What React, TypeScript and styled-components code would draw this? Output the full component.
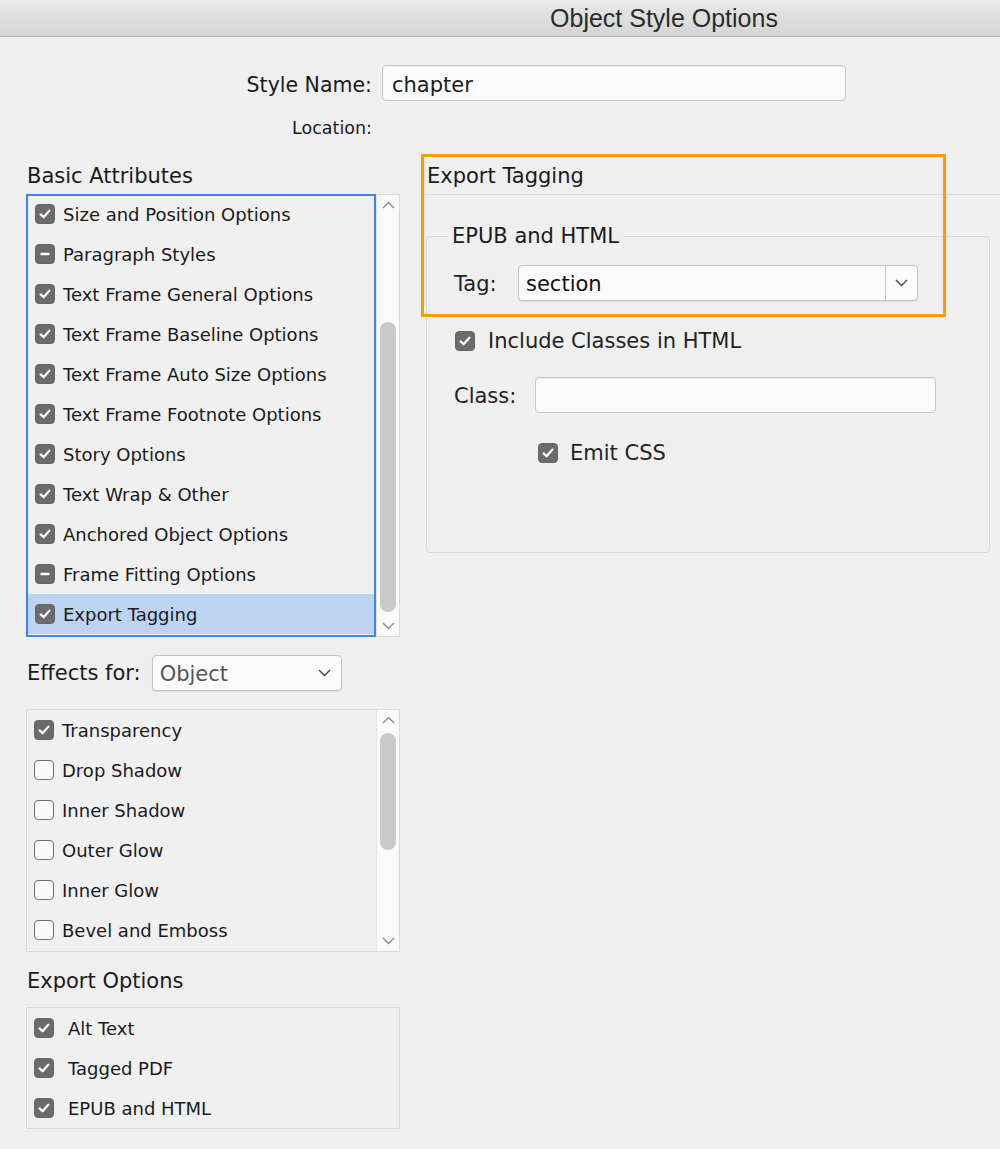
import React from 'react';
import styled, { createGlobalStyle } from 'styled-components';

const GlobalStyle = createGlobalStyle`
  html, body {
    margin: 0;
    padding: 0;
    background: #efefef;
  }
  body {
    font-family: 'DejaVu Sans', 'Noto Sans', sans-serif;
    color: #1a1a1a;
  }
  * { box-sizing: border-box; }
`;

type CheckState = 'on' | 'off' | 'mixed';

const basicAttributes: { label: string; state: CheckState }[] = [
  { label: 'Size and Position Options', state: 'on' },
  { label: 'Paragraph Styles', state: 'mixed' },
  { label: 'Text Frame General Options', state: 'on' },
  { label: 'Text Frame Baseline Options', state: 'on' },
  { label: 'Text Frame Auto Size Options', state: 'on' },
  { label: 'Text Frame Footnote Options', state: 'on' },
  { label: 'Story Options', state: 'on' },
  { label: 'Text Wrap & Other', state: 'on' },
  { label: 'Anchored Object Options', state: 'on' },
  { label: 'Frame Fitting Options', state: 'mixed' },
  { label: 'Export Tagging', state: 'on' },
];

const effects: { label: string; state: CheckState }[] = [
  { label: 'Transparency', state: 'on' },
  { label: 'Drop Shadow', state: 'off' },
  { label: 'Inner Shadow', state: 'off' },
  { label: 'Outer Glow', state: 'off' },
  { label: 'Inner Glow', state: 'off' },
  { label: 'Bevel and Emboss', state: 'off' },
];

const exportOptions = ['Alt Text', 'Tagged PDF', 'EPUB and HTML'];

const Window = styled.div`
  width: 1000px;
  height: 1149px;
  overflow: hidden;
  background: #efefef;
`;

const TitleBar = styled.div`
  height: 37px;
  background: linear-gradient(#e9e9e9, #d4d4d4);
  border-bottom: 1px solid #b4b4b4;
  display: flex;
  align-items: center;
  justify-content: center;
  padding-left: 328px;
  font-family: 'Liberation Sans', Arial, sans-serif;
  font-size: 25px;
  color: #2b2b2b;
`;

const NameGrid = styled.div`
  display: grid;
  grid-template-columns: 372px 464px;
  column-gap: 10px;
  row-gap: 16px;
  margin-top: 28px;
  align-items: center;
`;

const FieldLabel = styled.div<{ $size?: number; $shift?: number }>`
  text-align: right;
  font-size: ${p => p.$size ?? 20.5}px;
  line-height: 22px;
  padding-top: ${p => p.$shift ?? 0}px;
`;

const TextBox = styled.div<{ $width: number }>`
  width: ${p => p.$width}px;
  height: 36px;
  background: #fbfbfb;
  border: 1px solid #c6c6c6;
  border-radius: 4px;
  box-shadow: inset 0 1px 1px rgba(0, 0, 0, 0.06);
  display: flex;
  align-items: center;
  padding: 4px 0 0 9px;
  font-size: 21px;
`;

const Main = styled.div`
  display: flex;
  margin-top: 24px;
  padding-left: 26px;
`;

const LeftColumn = styled.div`
  width: 374px;
  display: flex;
  flex-direction: column;
`;

const RightColumn = styled.div`
  position: relative;
  flex: 1;
  margin-left: 25px;
`;

const SectionTitle = styled.div<{ $pad?: number; $top?: number }>`
  font-size: 21px;
  line-height: 26px;
  height: 26px;
  margin-top: ${p => p.$top ?? 0}px;
  padding-left: ${p => p.$pad ?? 1}px;
`;

const ListFrame = styled.div<{ $height: number; $top: number }>`
  display: flex;
  height: ${p => p.$height}px;
  margin-top: ${p => p.$top}px;
  border: 1px solid #d9d9d9;
  background: #f0f0f0;
`;

const ListPane = styled.div<{ $focused?: boolean }>`
  flex: 1;
  overflow: hidden;
  margin: ${p => (p.$focused ? '-1px 0 -1px -1px' : '0')};
  border: ${p => (p.$focused ? '2px solid #3a86f4' : 'none')};
`;

const Rows = styled.div<{ $offset?: number }>`
  margin-top: ${p => p.$offset ?? 0}px;
`;

const Row = styled.div<{ $selected?: boolean; $gap?: number }>`
  height: 40px;
  display: flex;
  align-items: center;
  gap: ${p => p.$gap ?? 8}px;
  padding-left: 7px;
  font-size: 18px;
  background: ${p => (p.$selected ? '#bcd4f1' : 'transparent')};
`;

const Box = styled.span<{ $state: CheckState }>`
  width: 20px;
  height: 20px;
  flex: none;
  border-radius: 4px;
  display: inline-flex;
  align-items: center;
  justify-content: center;
  background: ${p => (p.$state === 'off' ? '#f9f9f9' : '#6b6b6b')};
  border: 1.5px solid ${p => (p.$state === 'off' ? '#6e6e6e' : '#666')};
`;

const Scrollbar = styled.div`
  width: 23px;
  flex: none;
  background: #fafafa;
  border-left: 1px solid #e4e4e4;
  display: flex;
  flex-direction: column;
  align-items: center;
`;

const Arrow = styled.div`
  height: 20px;
  display: flex;
  align-items: center;
  justify-content: center;
`;

const Track = styled.div`
  flex: 1;
  width: 100%;
  padding: 0 3px;
`;

const Thumb = styled.div<{ $top: number; $height: number }>`
  margin-top: ${p => p.$top}px;
  height: ${p => p.$height}px;
  border-radius: 9px;
  background: #c9c9c9;
`;

const EffectsRow = styled.div`
  display: flex;
  align-items: center;
  gap: 11px;
  margin-top: 18px;
  padding-left: 1px;
  font-size: 21px;
`;

const Dropdown = styled.div<{ $width: number }>`
  width: ${p => p.$width}px;
  height: 36px;
  display: flex;
  align-items: center;
  background: #fbfbfb;
  border: 1px solid #c3c3c3;
  border-radius: 4px;
  box-shadow: 0 1px 1px rgba(0, 0, 0, 0.08);
  font-size: 21px;
`;

const DropdownValue = styled.div<{ $muted?: boolean }>`
  flex: 1;
  padding: 2px 0 0 7px;
  color: ${p => (p.$muted ? '#555' : '#111')};
`;

const DropdownButton = styled.div<{ $divided?: boolean }>`
  width: 32px;
  height: 100%;
  display: flex;
  align-items: center;
  justify-content: center;
  border-left: ${p => (p.$divided ? '1px solid #c9c9c9' : 'none')};
`;

const Separator = styled.div`
  height: 1px;
  background: #d9d9d9;
  margin-top: 5px;
`;

const GroupBox = styled.fieldset`
  margin: 28px 10px 0 1px;
  height: 330px;
  padding: 0 0 0 27px;
  border: 1px solid #d8d8d8;
  border-radius: 4px;
`;

const Legend = styled.legend`
  font-size: 21px;
  line-height: 26px;
  padding: 0 4px;
  margin-left: -6px;
`;

const FormRow = styled.div<{ $top: number; $indent?: number; $gap?: number }>`
  display: flex;
  align-items: center;
  margin-top: ${p => p.$top}px;
  padding-left: ${p => p.$indent ?? 0}px;
  gap: ${p => p.$gap ?? 0}px;
  font-size: 21px;
  color: #222;
`;

const InlineLabel = styled.span<{ $width: number }>`
  width: ${p => p.$width}px;
  flex: none;
  padding-top: 2px;
`;

const Highlight = styled.div`
  position: absolute;
  left: -4px;
  top: -9px;
  width: 525px;
  height: 163px;
  border: 3px solid #ff9a00;
  pointer-events: none;
`;

const Check: React.FC<{ state: CheckState }> = ({ state }) => (
  <Box $state={state}>
    {state === 'on' && (
      <svg width="14" height="14" viewBox="0 0 14 14">
        <path d="M2.6 7.4 L5.6 10.3 L11.4 3.6" fill="none" stroke="#fff" strokeWidth="2.2" strokeLinecap="round" strokeLinejoin="round" />
      </svg>
    )}
    {state === 'mixed' && (
      <svg width="12" height="12" viewBox="0 0 12 12">
        <rect x="1.5" y="4.8" width="9" height="2.4" rx="0.6" fill="#fff" />
      </svg>
    )}
  </Box>
);

const Chevron: React.FC<{ up?: boolean; color?: string }> = ({ up, color = '#8a8a8a' }) => (
  <svg width="13" height="8" viewBox="0 0 13 8">
    <path d={up ? 'M1 7 L6.5 1.5 L12 7' : 'M1 1 L6.5 6.5 L12 1'} fill="none" stroke={color} strokeWidth="1.4" />
  </svg>
);

const ScrollColumn: React.FC<{ thumbTop: number; thumbHeight: number }> = ({ thumbTop, thumbHeight }) => (
  <Scrollbar>
    <Arrow><Chevron up /></Arrow>
    <Track>
      <Thumb $top={thumbTop} $height={thumbHeight} />
    </Track>
    <Arrow><Chevron /></Arrow>
  </Scrollbar>
);

const App: React.FC = () => (
  <Window>
    <GlobalStyle />
    <TitleBar>Object Style Options</TitleBar>

    <NameGrid>
      <FieldLabel $shift={4}>Style Name:</FieldLabel>
      <TextBox $width={464}>chapter</TextBox>
      <FieldLabel $size={17.5}>Location:</FieldLabel>
      <div />
    </NameGrid>

    <Main>
      <LeftColumn>
        <SectionTitle>Basic Attributes</SectionTitle>
        <ListFrame $height={443} $top={5}>
          <ListPane $focused>
            <Rows $offset={-2}>
              {basicAttributes.map((item, i) => (
                <Row key={item.label} $selected={i === basicAttributes.length - 1}>
                  <Check state={item.state} />
                  {item.label}
                </Row>
              ))}
            </Rows>
          </ListPane>
          <ScrollColumn thumbTop={107} thumbHeight={290} />
        </ListFrame>

        <EffectsRow>
          Effects for:
          <Dropdown $width={190}>
            <DropdownValue $muted>Object</DropdownValue>
            <DropdownButton>
              <Chevron color="#444" />
            </DropdownButton>
          </Dropdown>
        </EffectsRow>

        <ListFrame $height={243} $top={18}>
          <ListPane>
            <Rows>
              {effects.map(item => (
                <Row key={item.label}>
                  <Check state={item.state} />
                  {item.label}
                </Row>
              ))}
            </Rows>
          </ListPane>
          <ScrollColumn thumbTop={3} thumbHeight={117} />
        </ListFrame>

        <SectionTitle $top={16}>Export Options</SectionTitle>
        <ListFrame $height={122} $top={13}>
          <ListPane>
            <Rows>
              {exportOptions.map(label => (
                <Row key={label} $gap={14}>
                  <Check state="on" />
                  {label}
                </Row>
              ))}
            </Rows>
          </ListPane>
        </ListFrame>
      </LeftColumn>

      <RightColumn>
        <SectionTitle $pad={2}>Export Tagging</SectionTitle>
        <Separator />
        <GroupBox>
          <Legend>EPUB and HTML</Legend>
          <FormRow $top={16}>
            <InlineLabel $width={64}>Tag:</InlineLabel>
            <Dropdown $width={400}>
              <DropdownValue>section</DropdownValue>
              <DropdownButton $divided>
                <Chevron color="#444" />
              </DropdownButton>
            </Dropdown>
          </FormRow>
          <FormRow $top={28} $indent={1} $gap={13}>
            <Check state="on" />
            Include Classes in HTML
          </FormRow>
          <FormRow $top={24}>
            <InlineLabel $width={81}>Class:</InlineLabel>
            <TextBox $width={401} />
          </FormRow>
          <FormRow $top={28} $indent={84} $gap={12}>
            <Check state="on" />
            Emit CSS
          </FormRow>
        </GroupBox>
        <Highlight />
      </RightColumn>
    </Main>
  </Window>
);

export default App;
